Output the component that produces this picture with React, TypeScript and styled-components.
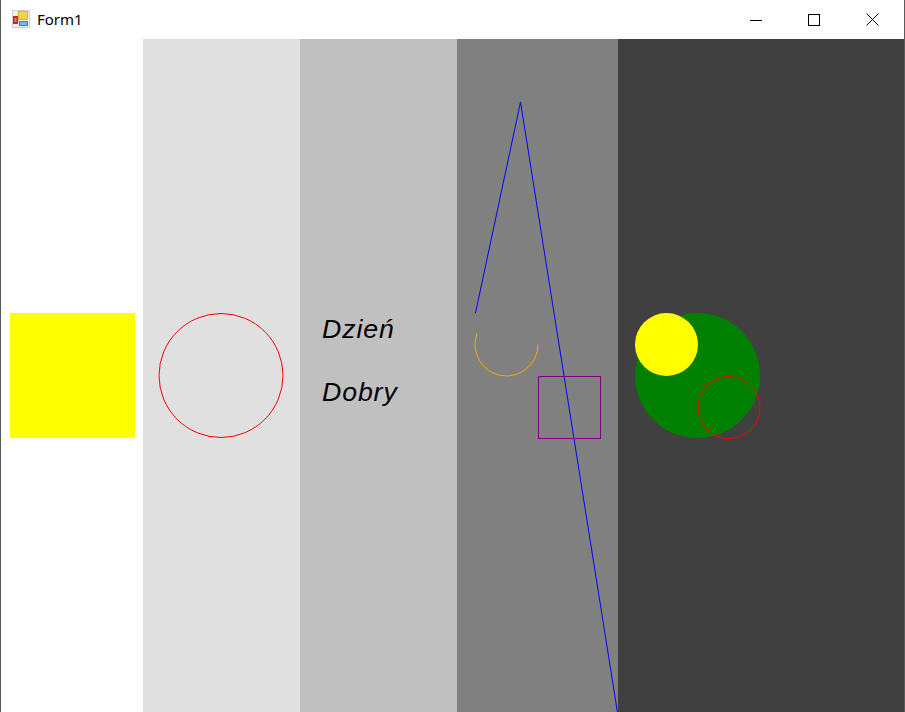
import { createGlobalStyle, styled } from 'styled-components';

const GlobalStyle = createGlobalStyle`
  html, body {
    margin: 0;
    padding: 0;
    background: #ffffff;
    overflow: hidden;
  }
`

const Window = styled.div`
  width: 905px;
  height: 712px;
  box-sizing: border-box;
  display: flex;
  flex-direction: column;
  border-left: 1px solid #5a5a5a;
  border-right: 1px solid #5a5a5a;
  background: #ffffff;
  overflow: hidden;
`

const TitleBar = styled.div`
  height: 39px;
  flex: none;
  display: flex;
  align-items: center;
  background: #ffffff;
`

const AppIcon = styled.svg`
  width: 18px;
  height: 18px;
  margin-left: 11px;
  margin-right: 7px;
  margin-top: -1px;
`

const Caption = styled.span`
  font-family: 'Segoe UI', 'Noto Sans', 'Open Sans', sans-serif;
  font-size: 15px;
  color: #000000;
  flex: 1;
  margin-top: -1px;
`

const Controls = styled.div`
  display: flex;
  height: 100%;
  padding-right: 3px;
`

const ControlButton = styled.div`
  width: 58px;
  height: 100%;
  display: flex;
  align-items: center;
  justify-content: center;
`

const Client = styled.div`
  flex: 1;
  display: flex;
`

const Panel = styled.div<{ $bg: string, $width: number }>`
  width: ${props => props.$width}px;
  flex: ${props => props.$width ? 'none' : '1'};
  height: 100%;
  background: ${props => props.$bg};
  position: relative;
  overflow: hidden;
`

const Canvas = styled.svg`
  display: block;
  width: 100%;
  height: 100%;
`

const TextPanel = styled(Panel)`
  display: flex;
  flex-direction: column;
  padding: 277px 0 0 22px;
  box-sizing: border-box;
`

const Greeting = styled.div<{ $gap?: number }>`
  font-family: 'Liberation Sans', Arial, sans-serif;
  font-style: italic;
  font-size: 26.67px;
  line-height: 1;
  letter-spacing: 0.9px;
  color: #000000;
  margin-top: ${props => props.$gap || 0}px;
`

function FormIcon() {
  return (
    <AppIcon viewBox="0 0 18 18">
      <rect x="0.5" y="0.5" width="17" height="17" fill="#f2f2f2" stroke="#cfcfcf" />
      <line x1="0" y1="6" x2="18" y2="6" stroke="#d8d8d8" />
      <line x1="6" y1="0" x2="6" y2="18" stroke="#d8d8d8" />
      <rect x="1" y="6" width="5" height="8" fill="#c8262a" />
      <rect x="2.5" y="8" width="2" height="4" fill="#e87a6e" />
      <rect x="6" y="1" width="10" height="9" fill="#e9b40c" />
      <rect x="7" y="2" width="8" height="7" fill="#f8d24a" />
      <rect x="7" y="11" width="9" height="5" fill="#3b7be0" />
      <rect x="8" y="12" width="7" height="3" fill="#7eb0f5" />
    </AppIcon>
  )
}

function App() {
  return (
    <>
      <GlobalStyle />
      <Window>
        <TitleBar>
          <FormIcon />
          <Caption>Form1</Caption>
          <Controls>
            <ControlButton>
              <svg width="12" height="12" viewBox="0 0 12 12">
                <line x1="0" y1="6.5" x2="12" y2="6.5" stroke="#000" strokeWidth="1" />
              </svg>
            </ControlButton>
            <ControlButton>
              <svg width="12" height="12" viewBox="0 0 12 12">
                <rect x="0.5" y="0.5" width="11" height="11" fill="none" stroke="#000" strokeWidth="1" />
              </svg>
            </ControlButton>
            <ControlButton>
              <svg width="13" height="13" viewBox="0 0 13 13">
                <path d="M0.5 0.5 L12.5 12.5 M12.5 0.5 L0.5 12.5" stroke="#000" strokeWidth="1" fill="none" />
              </svg>
            </ControlButton>
          </Controls>
        </TitleBar>
        <Client>
          <Panel $bg="#ffffff" $width={142}>
            <Canvas>
              <rect x="9" y="274" width="125" height="125" fill="#ffff00" />
            </Canvas>
          </Panel>
          <Panel $bg="#e0e0e0" $width={157}>
            <Canvas>
              <circle cx="78" cy="336.5" r="62" fill="none" stroke="#ff0000" strokeWidth="1" />
            </Canvas>
          </Panel>
          <TextPanel $bg="#c0c0c0" $width={157}>
            <Greeting>Dzień</Greeting>
            <Greeting $gap={36}>Dobry</Greeting>
          </TextPanel>
          <Panel $bg="#808080" $width={161}>
            <Canvas>
              <polyline points="18.5,274 63.5,63 166,708" fill="none" stroke="#0000ff" strokeWidth="1" />
              <path d="M81 305.5 A31.5 31.5 0 1 1 19.9 294.7" fill="none" stroke="#ffa500" strokeWidth="1" />
              <rect x="81.5" y="337.5" width="62" height="62" fill="none" stroke="#800080" strokeWidth="1" />
            </Canvas>
          </Panel>
          <Panel $bg="#404040" $width={0}>
            <Canvas>
              <circle cx="79.5" cy="336.5" r="62.5" fill="#008000" />
              <circle cx="48.5" cy="305.5" r="31.5" fill="#ffff00" />
              <circle cx="111" cy="368.5" r="31" fill="none" stroke="#ff0000" strokeWidth="1" />
            </Canvas>
          </Panel>
        </Client>
      </Window>
    </>
  )
}

export default App;
